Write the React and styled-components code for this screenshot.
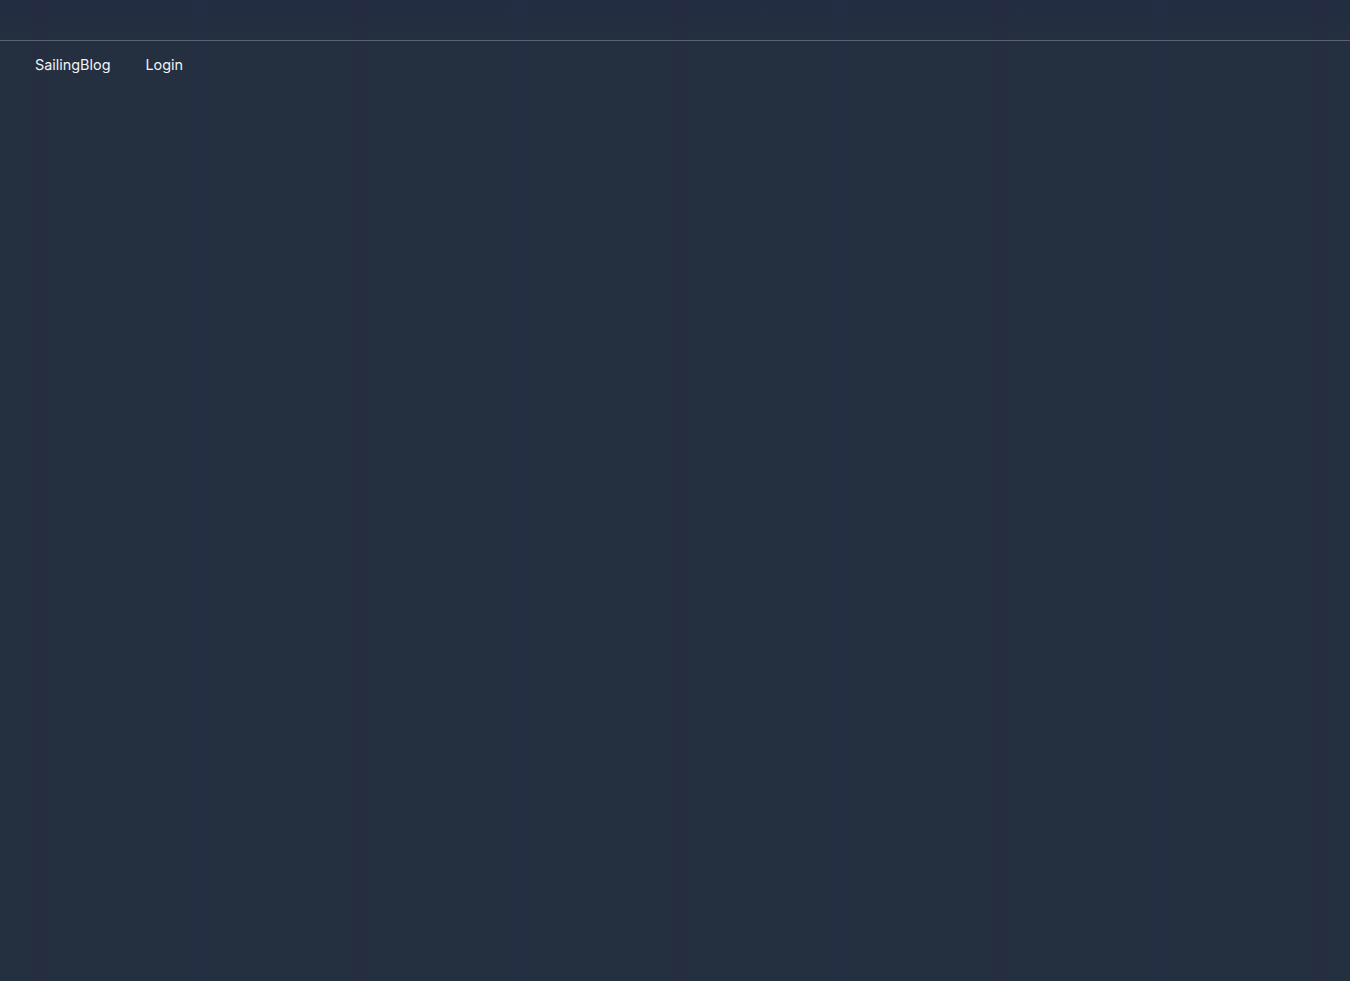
import React from "react";
import styled, { createGlobalStyle } from "styled-components";

const GlobalStyle = createGlobalStyle`
  html, body {
    margin: 0;
    padding: 0;
    background: #242f3f;
  }
  * { box-sizing: border-box; }
`;

const Page = styled.div`
  min-height: 1026px;
  background-color: #242f3f;
  background-image:
    repeating-linear-gradient(
      90deg,
      rgba(36, 45, 62, 0) 0px,
      rgba(36, 45, 62, 0) 32px,
      rgba(42, 42, 66, 0.3) 32px,
      rgba(42, 42, 66, 0.3) 48px,
      rgba(36, 45, 62, 0) 48px,
      rgba(36, 45, 62, 0) 192px,
      rgba(34, 46, 74, 0.3) 192px,
      rgba(34, 46, 74, 0.3) 208px,
      rgba(36, 45, 62, 0) 208px,
      rgba(36, 45, 62, 0) 320px
    );
  font-family: Inter, "Noto Sans", sans-serif;
  color: #f1f3f5;
`;

const TopBar = styled.header`
  height: 41px;
  border-bottom: 1px solid #5b6373;
  background-image: linear-gradient(
    180deg,
    rgba(34, 40, 70, 0.35) 0%,
    rgba(36, 47, 63, 0) 100%
  );
`;

const Nav = styled.nav`
  display: flex;
  align-items: center;
  gap: 35px;
  height: 48px;
  padding-left: 35px;
`;

const NavLink = styled.a`
  font-size: 14.4px;
  line-height: 20px;
  color: #f1f3f5;
  text-decoration: none;
  cursor: pointer;
`;

export default function App() {
  return (
    <>
      <GlobalStyle />
      <Page>
        <TopBar />
        <Nav>
          <NavLink>SailingBlog</NavLink>
          <NavLink>Login</NavLink>
        </Nav>
      </Page>
    </>
  );
}
